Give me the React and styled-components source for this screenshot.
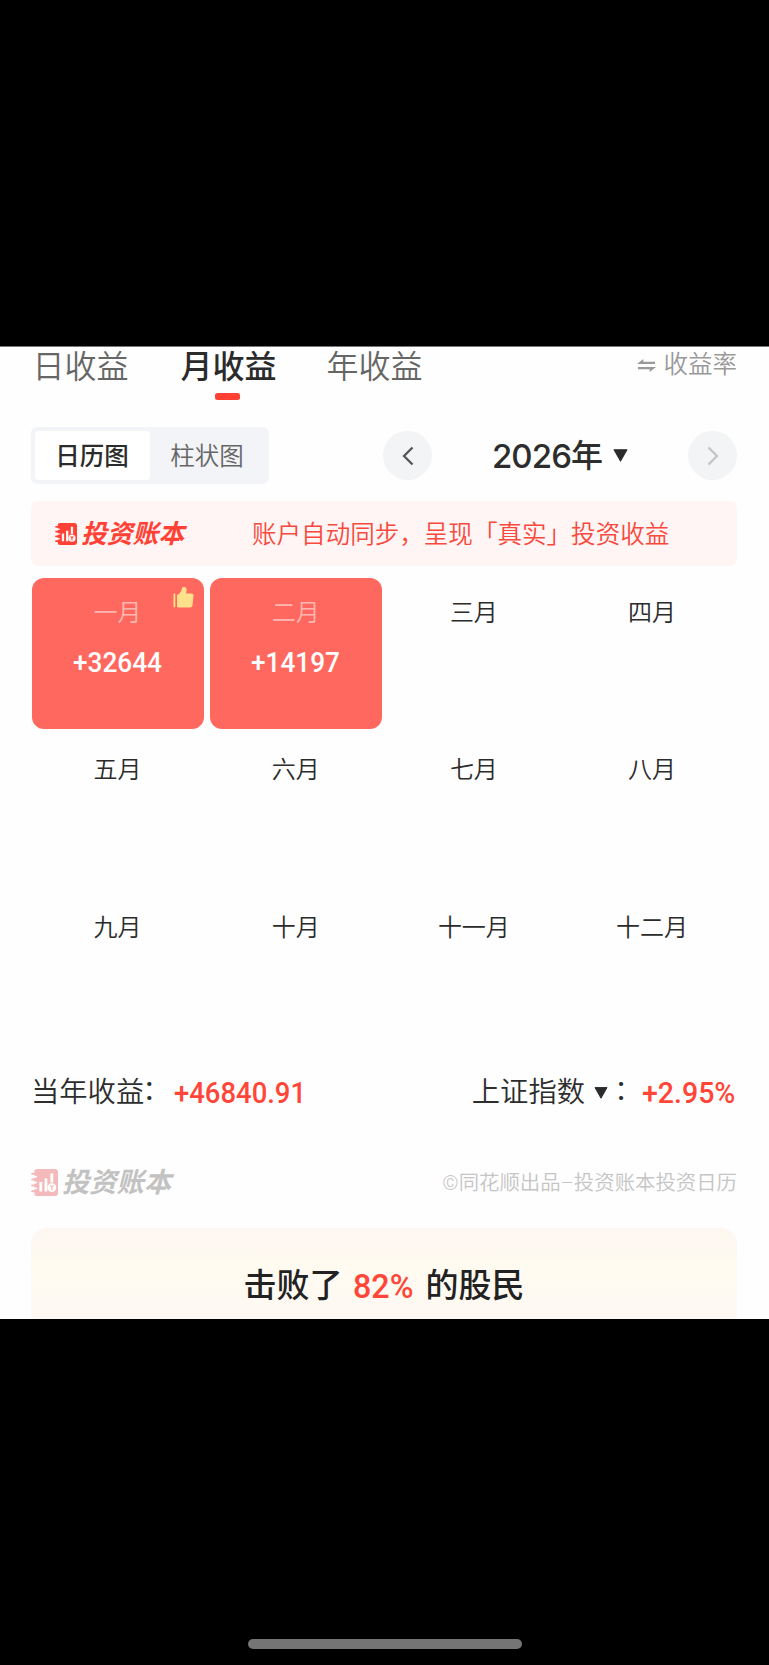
import React from "react";
import styled, { createGlobalStyle } from "styled-components";

const Global = createGlobalStyle`
  *{box-sizing:border-box}
  body{margin:0;background:#000}
`;
const Screen = styled.div`
  width:769px;height:1665px;background:#000;padding-top:346px;
  display:flex;flex-direction:column;
  font-family:Roboto,"Noto Sans CJK SC",sans-serif;color:#2d2d2d;
`;
const Page = styled.main`
  height:973px;background:#fefefe;padding:0 32px 0 31px;overflow:hidden;flex:none;
  border-top:1px solid #777;display:flex;flex-direction:column;
  > *{flex:none}
`;
const Tabs = styled.nav`
  display:flex;height:61px;align-items:flex-start;padding-left:1px;
`;
const Tab = styled.div`
  width:${p => p.$w}px;font-size:32px;line-height:40px;height:61px;white-space:nowrap;
  color:${p => (p.$active ? "#2b2b2b" : "#666")};
  font-weight:${p => (p.$active ? 500 : 350)};
`;
const TabInner = styled.div`
  width:97px;display:flex;flex-direction:column;align-items:center;
`;
const Underline = styled.div`
  width:25px;height:7px;border-radius:2.5px;background:#ff4033;margin:6px 3px 0 0;
`;
const Rate = styled.div`
  margin-left:auto;display:flex;align-items:center;gap:8px;color:#999;
  font-size:24.5px;line-height:36px;font-weight:350;
`;
const Controls = styled.div`
  display:flex;align-items:center;height:57px;margin-top:19px;
`;
const Segment = styled.div`
  width:238px;height:57px;border-radius:6px;background:#f3f4f7;padding:4px;display:flex;
`;
const SegmentItem = styled.div`
  width:115px;height:49px;border-radius:4px;display:flex;align-items:center;justify-content:center;
  font-size:24.5px;line-height:36px;padding:2px 1px 0 0;
  background:${p => (p.$active ? "#fff" : "transparent")};
  color:${p => (p.$active ? "#2b2b2b" : "#666")};
  font-weight:${p => (p.$active ? 500 : 350)};
`;
const Round = styled.div`
  width:49px;height:49px;border-radius:50%;background:#f3f4f6;flex:none;
  display:flex;align-items:center;justify-content:center;
`;
const PrevRound = styled(Round)`margin-left:114px;`;
const Year = styled.div`
  width:257px;display:flex;align-items:center;justify-content:center;
  font-size:32px;font-weight:500;line-height:44px;
`;
const YearDigits = styled.span`
  font-family:Inter,sans-serif;font-size:33px;letter-spacing:-.9px;
`;
const Banner = styled.div`
  height:65px;margin-top:17px;border-radius:8px;background:#fff5f4;
  display:flex;align-items:center;padding-left:24px;
`;
const Brand = styled.div`
  display:flex;align-items:center;gap:${p => p.$gap}px;width:${p => p.$w}px;
  color:${p => p.$color};font-size:${p => p.$size}px;font-weight:700;font-style:italic;
  line-height:36px;white-space:nowrap;
`;
const BannerText = styled.div`
  color:#f8493e;font-size:24.55px;line-height:36px;font-weight:350;white-space:nowrap;padding-top:2px;
`;
const Grid = styled.div`
  display:grid;grid-template-columns:repeat(4,172px);grid-auto-rows:151px;
  column-gap:6.2px;row-gap:6.5px;margin:11.5px 0 0 1px;
`;
const Month = styled.div`
  position:relative;border-radius:12px;padding:17px 1px 0 0;text-align:center;
  background:${p => (p.$on ? "#ff685e" : "transparent")};
`;
const MonthName = styled.div`
  font-size:24px;line-height:36px;font-weight:350;
  color:${p => (p.$on ? "#ffb7b2" : "#2b2b2b")};
`;
const Amount = styled.div`
  color:#fff;font-size:28px;line-height:36px;font-weight:500;margin-top:14px;
  transform:scaleX(.935);
`;
const Thumb = styled.svg`
  position:absolute;right:10px;top:9px;
`;
const Summary = styled.div`
  display:flex;justify-content:space-between;align-items:center;height:42px;margin-top:28px;
  font-size:28.3px;line-height:42px;font-weight:350;
`;
const Group = styled.div`display:flex;align-items:center;white-space:nowrap;`;
const Red = styled.span`
  color:#ff4638;font-weight:500;font-size:${p => p.$size}px;
  width:${p => p.$w}px;
  > span{display:inline-block;transform:scaleX(${p => p.$fit});transform-origin:left center;}
`;
const Colon = styled.span`
  width:${p => p.$w}px;padding-left:${p => p.$pad || 0}px;margin-left:-2px;padding-bottom:4px;
`;
const Caret = styled.svg`flex:none;margin-left:${p => p.$ml || 0}px;`;
const Credit = styled.div`
  display:flex;align-items:center;justify-content:space-between;height:40px;margin-top:49px;
`;
const Copyright = styled.div`
  color:#c5c5c5;font-size:20.4px;line-height:32px;font-weight:350;white-space:nowrap;
`;
const Beat = styled.section`
  height:110px;margin-top:25px;border-radius:16px 16px 0 0;padding-top:35px;
  background:linear-gradient(#fdf7f1 0,#fdf8f0 22px,#fffbf0 34px,#fefaf1 56px,#fef8f2 92px);
  display:flex;justify-content:center;gap:10px;font-size:33px;line-height:46px;font-weight:500;color:#222;
`;
const HomeBar = styled.div`
  width:274px;height:10px;border-radius:5px;background:#757575;margin:auto 0 16px 247.5px;
`;

const Ledger = ({ size, color, hole }) => (
  <svg width={size} height={size} viewBox="0 0 24 24">
    <path d="M5.500 0H21a3 3 0 0 1 3 3v18a3 3 0 0 1-3 3H5.500a2.500 2.500 0 0 1-2.500-2.500v-19A2.500 2.500 0 0 1 5.500 0Z" fill={color} />
    <path d="M2 6.800H4.500M2 12H4.500M2 17.200H4.500" stroke={hole} strokeWidth="1.700" strokeLinecap="round" />
    <path d="M1 4.200h3.500M1 9.400h3.500M1 14.600h3.500M1 19.800h3.500" stroke={color} strokeWidth="1.700" strokeLinecap="round" />
    <path d="M8.700 11.500V20M13.300 8.500V20M18.500 4v8" stroke={hole} strokeWidth="2.500" />
    <circle cx="18.500" cy="16.500" r="3.900" fill={hole} />
    <path d="m17 14.500 1.500 1.600 1.500-1.600M18.500 16.100v2.700" stroke={color} strokeWidth="1.100" fill="none" />
  </svg>
);
const Down = ({ w, h, ml }) => (
  <Caret $ml={ml} width={w} height={h} viewBox="0 0 14 12">
    <path d="M1 .6h12L7 11.200Z" fill="#2b2b2b" stroke="#2b2b2b" strokeLinejoin="round" />
  </Caret>
);
const Chevron = ({ left, color }) => (
  <svg width="12" height="20" viewBox="0 0 12 20">
    <path d={left ? "M10.5 1.5 2 10l8.5 8.5" : "M1.5 1.5 10 10l-8.5 8.5"} fill="none" stroke={color} strokeWidth="2.3" />
  </svg>
);
const Figure = ({ size, w, fit, children }) => (
  <Red $size={size} $w={w} $fit={fit}><span>{children}</span></Red>
);

const months = ["一月","二月","三月","四月","五月","六月","七月","八月","九月","十月","十一月","十二月"];
const gains = ["+32644", "+14197"];

export default function App() {
  return (
    <Screen>
      <Global />
      <Page>
        <Tabs>
          <Tab $w={148}><TabInner>日收益</TabInner></Tab>
          <Tab $w={146} $active><TabInner>月收益<Underline /></TabInner></Tab>
          <Tab $w={97}><TabInner>年收益</TabInner></Tab>
          <Rate>
            <svg width="19" height="13" viewBox="0 0 19 13" fill="#999">
              <path d="M0 4.900 6.300 0v2.800H18v2.100ZM19 8.100 12.700 13v-2.800H1V8.100Z" />
            </svg>
            收益率
          </Rate>
        </Tabs>
        <Controls>
          <Segment>
            <SegmentItem $active>日历图</SegmentItem>
            <SegmentItem>柱状图</SegmentItem>
          </Segment>
          <PrevRound><Chevron left color="#555" /></PrevRound>
          <Year><YearDigits>2026</YearDigits>年<Down w={15} h={13} ml={10} /></Year>
          <Round><Chevron color="#c4c4c6" /></Round>
        </Controls>
        <Banner>
          <Brand $gap={4} $w={197} $color="#ff4136" $size={25.8}>
            <Ledger size={22} color="#ff4136" hole="#fff5f4" />投资账本
          </Brand>
          <BannerText>账户自动同步，呈现「真实」投资收益</BannerText>
        </Banner>
        <Grid>
          {months.map((m, i) => (
            <Month key={m} $on={i < 2}>
              <MonthName $on={i < 2}>{m}</MonthName>
              {gains[i] && <Amount>{gains[i]}</Amount>}
              {i === 0 && (
                <Thumb width="21" height="21" viewBox="0 0 21 21" fill="#ffe18c">
                  <rect x="0.5" y="6.5" width="1.800" height="14" rx=".9" />
                  <path d="M4 8q4-1.500 5-7Q9.300 0 11 0q3 .3 2.600 3.500L13 6.500h5.500q2 0 2 2L19.500 18.500q-.4 2-2.500 2H5.500Q4 20.500 4 19Z" />
                </Thumb>
              )}
            </Month>
          ))}
        </Grid>
        <Summary>
          <Group>当年收益<Colon $w={32}>：</Colon><Figure size={30} w={132} fit={0.915}>+46840.91</Figure></Group>
          <Group>上证指数<Down w={14} h={12} ml={9} /><Colon $w={36} $pad={8}>：</Colon><Figure size={30} w={95} fit={0.95}>+2.95%</Figure></Group>
        </Summary>
        <Credit>
          <Brand $gap={4} $w={160} $color="#c2c2c2" $size={27.3}>
            <Ledger size={27} color="#f3b9bb" hole="#fff" />投资账本
          </Brand>
          <Copyright>©同花顺出品–投资账本投资日历</Copyright>
        </Credit>
        <Beat>击败了<Figure size={34} w={63} fit={0.95}>82%</Figure>的股民</Beat>
      </Page>
      <HomeBar />
    </Screen>
  );
}
